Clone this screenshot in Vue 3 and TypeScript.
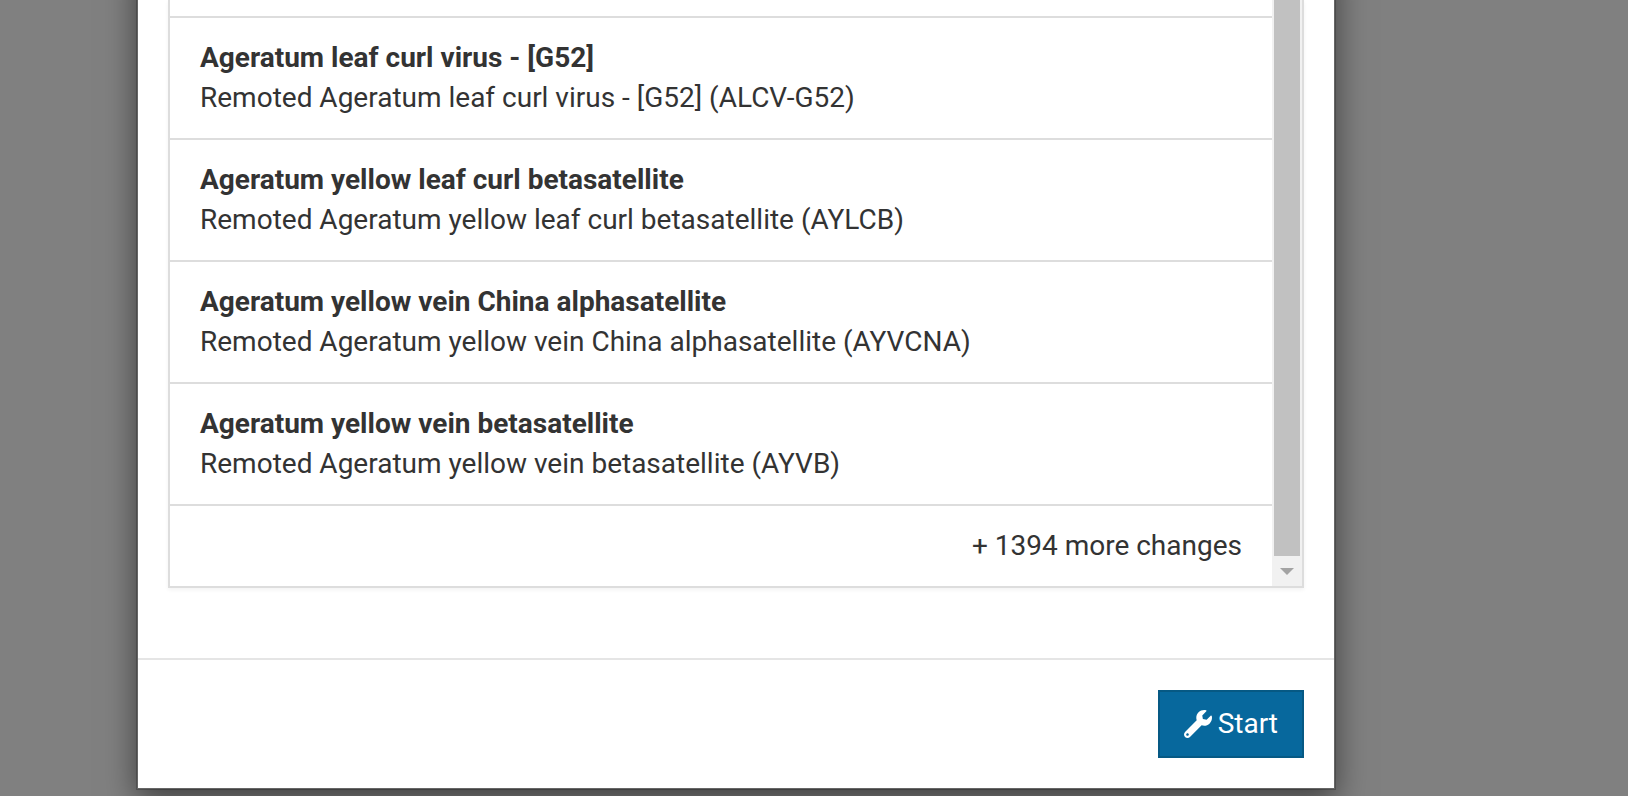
<script setup lang="ts">
interface Change {
  name: string
  description: string
}

const changes: Change[] = [
  {
    name: 'Ageratum leaf curl virus - [G52]',
    description: 'Remoted Ageratum leaf curl virus - [G52] (ALCV-G52)',
  },
  {
    name: 'Ageratum yellow leaf curl betasatellite',
    description: 'Remoted Ageratum yellow leaf curl betasatellite (AYLCB)',
  },
  {
    name: 'Ageratum yellow vein China alphasatellite',
    description: 'Remoted Ageratum yellow vein China alphasatellite (AYVCNA)',
  },
  {
    name: 'Ageratum yellow vein betasatellite',
    description: 'Remoted Ageratum yellow vein betasatellite (AYVB)',
  },
]
const remaining = 1394
</script>

<template>
  <div class="backdrop">
    <div class="modal">
      <div class="modal-body">
        <div class="panel">
          <div class="list">
            <div class="previous"></div>
            <div v-for="change in changes" :key="change.name" class="item">
              <strong>{{ change.name }}</strong>
              <div>{{ change.description }}</div>
            </div>
            <div class="item more">+ {{ remaining }} more changes</div>
          </div>
          <div class="scrollbar">
            <div class="thumb"></div>
            <div class="arrow">
              <svg width="14" height="7" viewBox="0 0 14 7"><path d="M0 0h14L7 7z" fill="#a3a3a3" /></svg>
            </div>
          </div>
        </div>
      </div>
      <div class="modal-footer">
        <button type="button" class="start">
          <svg class="wrench" viewBox="0 0 512 512">
            <path
              fill="currentColor"
              d="M507.73 109.1c-2.24-9.03-13.54-12.09-20.12-5.51l-74.36 74.36-67.88-11.31-11.31-67.88 74.36-74.36c6.62-6.62 3.43-17.9-5.66-20.16-47.38-11.74-99.55.91-136.58 37.93-39.64 39.64-50.55 97.1-34.05 147.2L18.74 402.76c-24.99 24.99-24.99 65.51 0 90.5 24.99 24.99 65.51 24.99 90.5 0l213.21-213.21c50.12 16.71 107.47 5.68 147.37-34.22 37.07-37.07 49.7-89.32 37.91-136.73zM64 472c-13.25 0-24-10.75-24-24 0-13.26 10.75-24 24-24s24 10.74 24 24c0 13.25-10.75 24-24 24z"
            />
          </svg>
          <span>Start</span>
        </button>
      </div>
    </div>
  </div>
</template>

<style scoped>
.backdrop {
  box-sizing: border-box;
  height: 796px;
  padding-left: 136px;
  overflow: hidden;
  background: #808080;
  color: #333;
  font-family: Roboto, "Liberation Sans", sans-serif;
  font-size: 28px;
  line-height: 40px;
}
.modal {
  box-sizing: border-box;
  width: 1200px;
  height: 830px;
  margin-top: -40px;
  padding-top: 40px;
  border: 2px solid rgba(0, 0, 0, 0.2);
  border-top: 0;
  background: #fff;
  background-clip: padding-box;
  box-shadow: 0 10px 30px rgba(0, 0, 0, 0.5);
}
.modal-body {
  box-sizing: border-box;
  height: 658px;
  padding: 0 30px;
}
.panel {
  box-sizing: border-box;
  display: flex;
  height: 588px;
  border: 2px solid #ddd;
  border-top: 0;
  box-shadow: 0 2px 4px rgba(0, 0, 0, 0.05);
}
.list {
  flex: 1;
}
.previous {
  height: 16px;
}
.item {
  padding: 20px 30px;
  border-top: 2px solid #ddd;
}
.item strong {
  display: block;
  font-weight: 700;
}
.more {
  text-align: right;
}
.scrollbar {
  display: flex;
  flex-direction: column;
  width: 30px;
  background: #f1f1f1;
}
.thumb {
  height: 556px;
  margin: 0 2px;
  background: #c1c1c1;
}
.arrow {
  display: flex;
  flex: 1;
  align-items: center;
  justify-content: center;
}
.arrow svg {
  display: block;
  margin-right: 0;
}
.modal-footer {
  display: flex;
  justify-content: flex-end;
  padding: 30px;
  border-top: 2px solid #e5e5e5;
}
.start {
  box-sizing: border-box;
  display: flex;
  align-items: center;
  justify-content: space-between;
  width: 146px;
  height: 68px;
  padding: 0 24px;
  border: 2px solid #065984;
  border-radius: 0;
  background: #07689d;
  color: #fff;
  font: inherit;
}
.wrench {
  display: block;
  width: 28px;
  height: 28px;
}
</style>
